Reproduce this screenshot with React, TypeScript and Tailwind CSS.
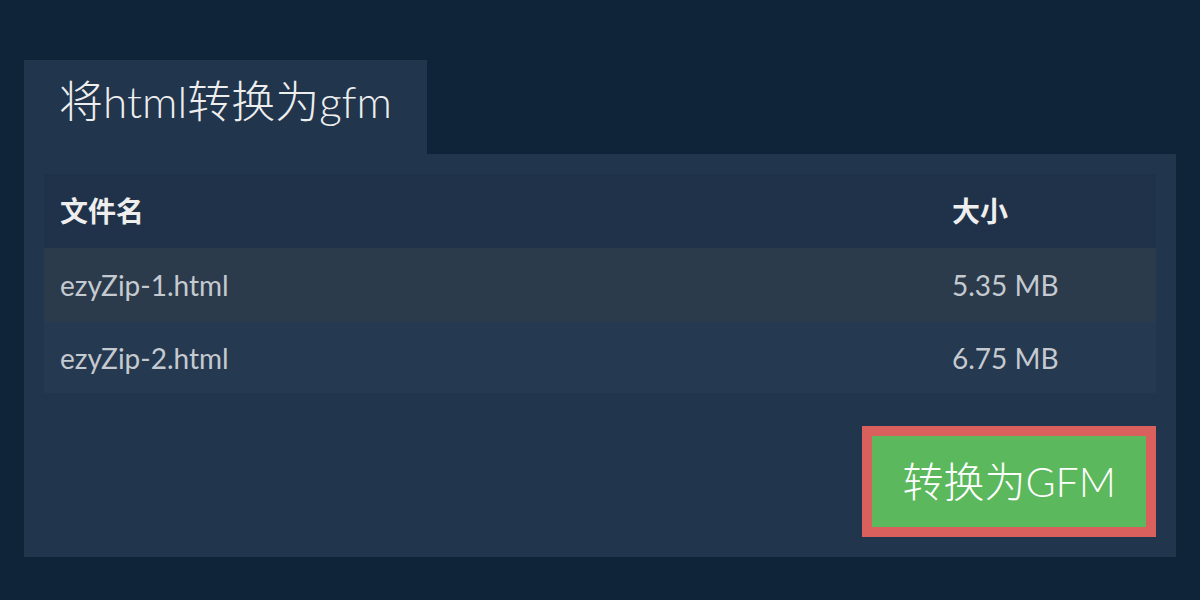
import React from 'react';

const files = [
  { name: 'ezyZip-1.html', size: '5.35 MB', bg: 'bg-[#2b3b4c]', h: 'h-[74px]' },
  { name: 'ezyZip-2.html', size: '6.75 MB', bg: 'bg-[#253950]', h: 'h-[71px]' },
];

export default function App() {
  return (
    <div className="min-h-[600px] w-full bg-[#0f2339] px-6 pt-[60px] font-['Lato','Noto_Sans_CJK_SC',sans-serif]">
      <div className="flex">
        <div className="flex h-[94px] items-center bg-[#21354d] px-[35px] pb-3">
          <h1 className="text-[44px] font-light leading-none text-[#eeeeee]">将html转换为gfm</h1>
        </div>
      </div>
      <div className="bg-[#21354d] p-5">
        <div className="w-full">
          <div className="grid h-[74px] grid-cols-[892px_1fr] items-center bg-[#1f3249] px-4 text-[28px] font-bold text-[#eeeeee]">
            <div>文件名</div>
            <div>大小</div>
          </div>
          {files.map((f) => (
            <div
              key={f.name}
              className={`grid grid-cols-[892px_1fr] items-center px-4 text-[28px] text-[#c5cad0] ${f.bg} ${f.h}`}
            >
              <div>{f.name}</div>
              <div>{f.size}</div>
            </div>
          ))}
        </div>
        <div className="mt-[33px] flex justify-end">
          <button className="flex h-[111px] items-center border-[10px] border-[#d9605d] bg-[#5cb85c] px-[30px] text-[41px] font-light leading-none text-white">
            转换为GFM
          </button>
        </div>
      </div>
    </div>
  );
}
